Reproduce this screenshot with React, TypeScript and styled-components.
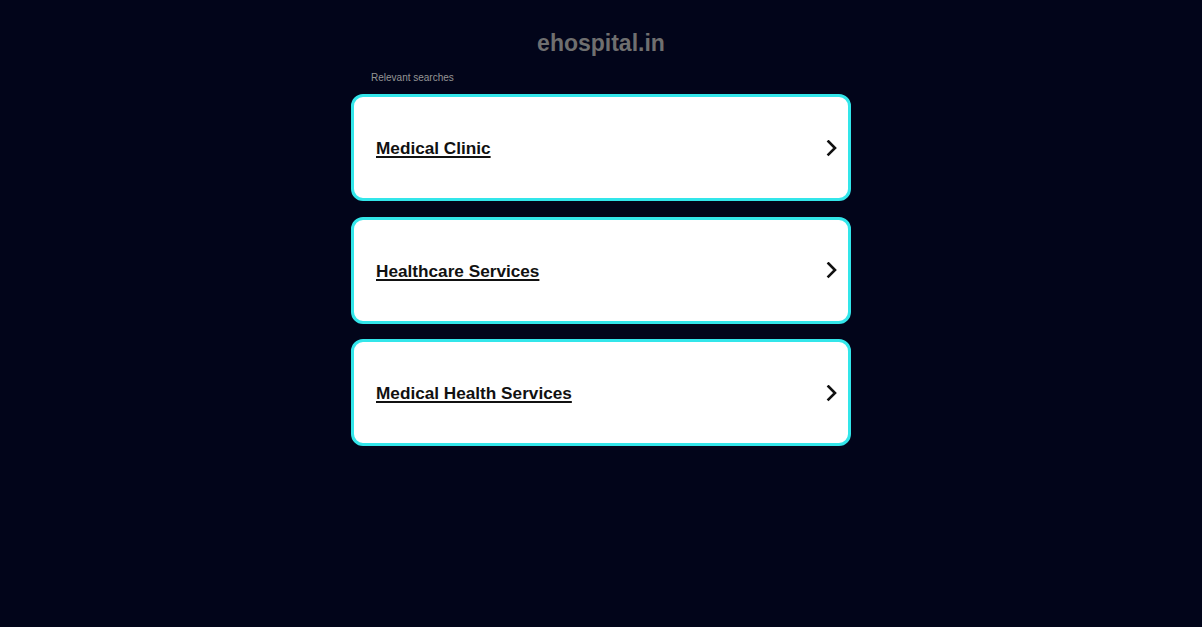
import React from "react";
import styled, { createGlobalStyle } from "styled-components";

const Global = createGlobalStyle`
  html, body { margin: 0; padding: 0; background: #02051a; }
  body { font-family: "Liberation Sans", Arial, sans-serif; min-height: 627px; }
`;

const Page = styled.div`
  display: flex;
  flex-direction: column;
  align-items: center;
  padding-top: 29px;
`;

const Title = styled.h1`
  margin: 0;
  font-size: 23px;
  line-height: 28px;
  font-weight: bold;
  color: #6f6f6f;
`;

const Container = styled.div`
  width: 500px;
  margin-top: 15px;
  display: flex;
  flex-direction: column;
`;

const Label = styled.div`
  font-size: 10px;
  line-height: 12px;
  color: #959595;
  padding-left: 20px;
  margin-bottom: 10px;
`;

const List = styled.div`
  display: flex;
  flex-direction: column;
  gap: 15.5px;
`;

const Card = styled.a`
  box-sizing: border-box;
  height: 107px;
  display: flex;
  align-items: center;
  justify-content: space-between;
  background: #ffffff;
  border: 3px solid #33e6ea;
  border-radius: 12px;
  padding: 2px 10px 0 22px;
  text-decoration: none;
  cursor: pointer;
`;

const CardText = styled.span`
  font-size: 17.2px;
  font-weight: bold;
  color: #111111;
  text-decoration: underline;
  text-underline-offset: 2px;
  text-decoration-thickness: 2px;
`;

const Chevron = () => (
  <svg width="12" height="18" viewBox="0 0 12 18" fill="none">
    <path d="M2.5 1.5 L9 8 L2.5 14.5" stroke="#111" strokeWidth="2.6" strokeLinecap="square" />
  </svg>
);

const items = ["Medical Clinic", "Healthcare Services", "Medical Health Services"];

export default function App() {
  return (
    <>
      <Global />
      <Page>
        <Title>ehospital.in</Title>
        <Container>
          <Label>Relevant searches</Label>
          <List>
            {items.map((t) => (
              <Card key={t}>
                <CardText>{t}</CardText>
                <Chevron />
              </Card>
            ))}
          </List>
        </Container>
      </Page>
    </>
  );
}
